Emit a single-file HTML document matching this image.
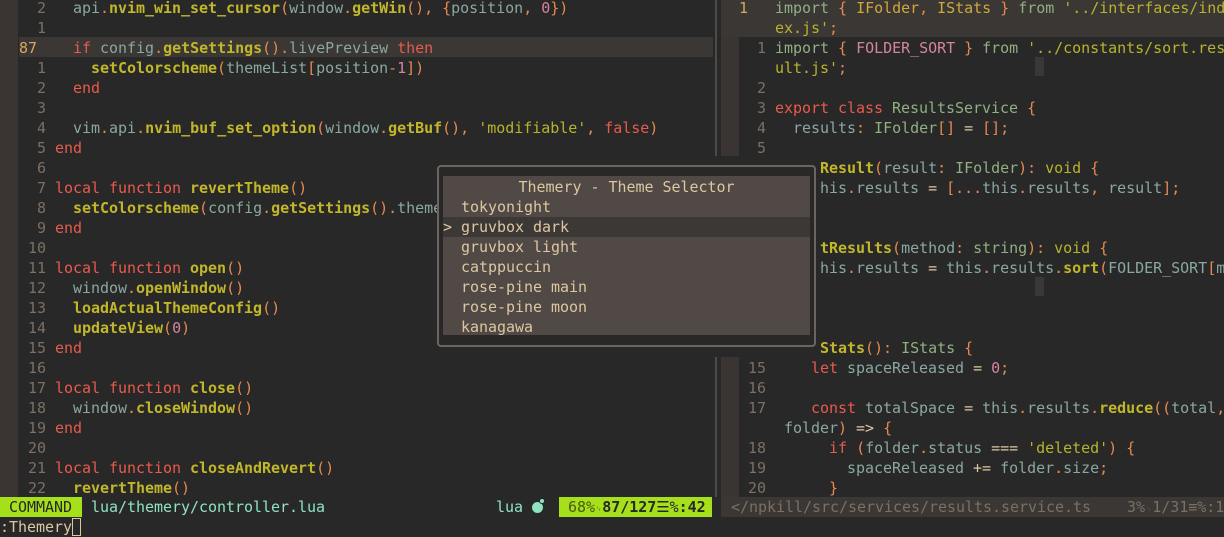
<!DOCTYPE html>
<html><head><meta charset="utf-8"><style>
*{margin:0;padding:0;box-sizing:border-box}
body{width:1224px;height:536px;overflow:hidden;background:#282828;font-family:"DejaVu Sans Mono","Liberation Mono",monospace;font-size:15px;letter-spacing:-0.03px;color:#8aa8a0;position:relative}
.r{position:absolute;height:20px;line-height:20px;white-space:pre;overflow:hidden}
.n{color:#7c6f64}
.cn{color:#d8a657}
.k{color:#ea5a4c}
.f{color:#c2b72a;font-weight:bold}
.p{color:#e78a4e}
.m{color:#d3869b}
.s{color:#b8b32c}
.g{color:#8fb080}
.y{color:#d0a83c}
.w{color:#ddc7a1}
</style></head><body>
<div style="position:absolute;left:0;top:0;width:18px;height:497px;background:#3a3532"></div>
<div style="position:absolute;left:19px;top:37px;width:694px;height:20px;background:#3a3735"></div>
<div style="position:absolute;left:715px;top:0;width:2px;height:497px;background:#504945"></div>
<div style="position:absolute;left:721px;top:0;width:18px;height:497px;background:#3a3532"></div>
<div style="position:absolute;left:721px;top:-3px;width:503px;height:40px;background:#3a3735"></div>

<div id="L" style="position:absolute;left:0;top:1px;width:713px;height:496px;overflow:hidden">
<div class="r" style="left:19px;top:-3px"><span class="n">  2 </span>  api<span class="p">.</span><span class="f">nvim_win_set_cursor</span><span class="p">(</span>window<span class="p">.</span><span class="f">getWin</span><span class="p">(),</span> <span class="p">{</span>position<span class="p">,</span> <span class="m">0</span><span class="p">})</span></div>
<div class="r" style="left:19px;top:17px"><span class="n">  1 </span></div>
<div class="r" style="left:19px;top:37px"><span class="cn">87  </span>  <span class="k">if</span> config<span class="p">.</span><span class="f">getSettings</span><span class="p">().</span>livePreview <span class="k">then</span></div>
<div class="r" style="left:19px;top:57px"><span class="n">  1 </span>    <span class="f">setColorscheme</span><span class="p">(</span>themeList<span class="p">[</span>position<span class="p">-</span><span class="m">1</span><span class="p">])</span></div>
<div class="r" style="left:19px;top:77px"><span class="n">  2 </span>  <span class="k">end</span></div>
<div class="r" style="left:19px;top:97px"><span class="n">  3 </span></div>
<div class="r" style="left:19px;top:117px"><span class="n">  4 </span>  vim<span class="p">.</span>api<span class="p">.</span><span class="f">nvim_buf_set_option</span><span class="p">(</span>window<span class="p">.</span><span class="f">getBuf</span><span class="p">(),</span> <span class="s">'modifiable'</span><span class="p">,</span> <span class="k">false</span><span class="p">)</span></div>
<div class="r" style="left:19px;top:137px"><span class="n">  5 </span><span class="k">end</span></div>
<div class="r" style="left:19px;top:157px"><span class="n">  6 </span></div>
<div class="r" style="left:19px;top:177px"><span class="n">  7 </span><span class="k">local function</span> <span class="f">revertTheme</span><span class="p">()</span></div>
<div class="r" style="left:19px;top:197px"><span class="n">  8 </span>  <span class="f">setColorscheme</span><span class="p">(</span>config<span class="p">.</span><span class="f">getSettings</span><span class="p">().</span>themeList</div>
<div class="r" style="left:19px;top:217px"><span class="n">  9 </span><span class="k">end</span></div>
<div class="r" style="left:19px;top:237px"><span class="n"> 10 </span></div>
<div class="r" style="left:19px;top:257px"><span class="n"> 11 </span><span class="k">local function</span> <span class="f">open</span><span class="p">()</span></div>
<div class="r" style="left:19px;top:277px"><span class="n"> 12 </span>  window<span class="p">.</span><span class="f">openWindow</span><span class="p">()</span></div>
<div class="r" style="left:19px;top:297px"><span class="n"> 13 </span>  <span class="f">loadActualThemeConfig</span><span class="p">()</span></div>
<div class="r" style="left:19px;top:317px"><span class="n"> 14 </span>  <span class="f">updateView</span><span class="p">(</span><span class="m">0</span><span class="p">)</span></div>
<div class="r" style="left:19px;top:337px"><span class="n"> 15 </span><span class="k">end</span></div>
<div class="r" style="left:19px;top:357px"><span class="n"> 16 </span></div>
<div class="r" style="left:19px;top:377px"><span class="n"> 17 </span><span class="k">local function</span> <span class="f">close</span><span class="p">()</span></div>
<div class="r" style="left:19px;top:397px"><span class="n"> 18 </span>  window<span class="p">.</span><span class="f">closeWindow</span><span class="p">()</span></div>
<div class="r" style="left:19px;top:417px"><span class="n"> 19 </span><span class="k">end</span></div>
<div class="r" style="left:19px;top:437px"><span class="n"> 20 </span></div>
<div class="r" style="left:19px;top:457px"><span class="n"> 21 </span><span class="k">local function</span> <span class="f">closeAndRevert</span><span class="p">()</span></div>
<div class="r" style="left:19px;top:477px"><span class="n"> 22 </span>  <span class="f">revertTheme</span><span class="p">()</span></div>
</div>

<div id="R" style="position:absolute;left:721px;top:1px;width:503px;height:496px;overflow:hidden">
<div class="r" style="left:18px;top:-3px"><span class="cn">1   </span><span class="g">import</span> <span class="p">{</span> <span class="y">IFolder</span><span class="p">,</span> <span class="y">IStats</span> <span class="p">}</span> <span class="g">from</span> <span class="s">'../interfaces/index</span></div>
<div class="r" style="left:18px;top:17px">    <span class="s">ex.js'</span><span class="p">;</span></div>
<div class="r" style="left:18px;top:37px"><span class="n">  1 </span><span class="g">import</span> <span class="p">{</span> <span class="m">FOLDER_SORT</span> <span class="p">}</span> <span class="g">from</span> <span class="s">'../constants/sort.result</span></div>
<div class="r" style="left:18px;top:57px">    <span class="s">ult.js'</span><span class="p">;</span></div>
<div class="r" style="left:18px;top:77px"><span class="n">  2 </span></div>
<div class="r" style="left:18px;top:97px"><span class="n">  3 </span><span class="k">export class</span> <span class="g">ResultsService</span> <span class="p">{</span></div>
<div class="r" style="left:18px;top:117px"><span class="n">  4 </span>  results<span class="p">:</span> <span class="g">IFolder</span><span class="p">[]</span> <span class="w">=</span> <span class="p">[];</span></div>
<div class="r" style="left:18px;top:137px"><span class="n">  5 </span></div>
<div class="r" style="left:18px;top:157px"><span class="n">  6 </span>  <span class="f">addResult</span><span class="p">(</span>result<span class="p">:</span> <span class="g">IFolder</span><span class="p">):</span> <span class="s">void</span> <span class="p">{</span></div>
<div class="r" style="left:18px;top:177px"><span class="n">  7 </span>    this<span class="p">.</span>results <span class="w">=</span> <span class="p">[...</span>this<span class="p">.</span>results<span class="p">,</span> result<span class="p">];</span></div>
<div class="r" style="left:18px;top:237px"><span class="n"> 10 </span>  <span class="f">sortResults</span><span class="p">(</span>method<span class="p">:</span> <span class="g">string</span><span class="p">):</span> <span class="s">void</span> <span class="p">{</span></div>
<div class="r" style="left:18px;top:257px"><span class="n"> 11 </span>    this<span class="p">.</span>results <span class="w">=</span> this<span class="p">.</span>results<span class="p">.</span><span class="f">sort</span><span class="p">(</span>FOLDER_SORT<span class="p">[</span>method</div>
<div class="r" style="left:18px;top:277px">    <span class="p">]);</span></div>
<div class="r" style="left:18px;top:337px"><span class="n"> 14 </span>  <span class="f">getStats</span><span class="p">():</span> <span class="g">IStats</span> <span class="p">{</span></div>
<div class="r" style="left:18px;top:357px"><span class="n"> 15 </span>    <span class="k">let</span> spaceReleased <span class="w">=</span> <span class="m">0</span><span class="p">;</span></div>
<div class="r" style="left:18px;top:377px"><span class="n"> 16 </span></div>
<div class="r" style="left:18px;top:397px"><span class="n"> 17 </span>    <span class="k">const</span> totalSpace <span class="w">=</span> this<span class="p">.</span>results<span class="p">.</span><span class="f">reduce</span><span class="p">((</span>total<span class="p">,</span></div>
<div class="r" style="left:18px;top:417px">     folder<span class="p">)</span> <span class="w">=&gt;</span> <span class="p">{</span></div>
<div class="r" style="left:18px;top:437px"><span class="n"> 18 </span>      <span class="k">if</span> <span class="p">(</span>folder<span class="p">.</span>status <span class="w">===</span> <span class="s">'deleted'</span><span class="p">)</span> <span class="p">{</span></div>
<div class="r" style="left:18px;top:457px"><span class="n"> 19 </span>        spaceReleased <span class="w">+=</span> folder<span class="p">.</span>size<span class="p">;</span></div>
<div class="r" style="left:18px;top:477px"><span class="n"> 20 </span>      <span class="p">}</span></div>
<div style="position:absolute;left:314px;top:56px;width:9px;height:19px;background:#3a3735"></div>
<div style="position:absolute;left:314px;top:276px;width:9px;height:19px;background:#3a3735"></div>
</div>

<div style="position:absolute;left:437px;top:156px;width:383px;height:201px;background:#282828"></div>
<div style="position:absolute;left:437px;top:165px;width:379px;height:182px;border:2px solid #6e645c;border-radius:4px;background:#282828"></div>
<div style="position:absolute;left:443px;top:176px;width:367px;height:159px;background:#504945;color:#ddc7a1">
<div class="r" style="left:0;top:1px;width:367px;text-align:center">Themery - Theme Selector</div>
<div class="r" style="left:0;top:21px">  tokyonight</div>
<div class="r" style="left:0;top:41px;width:367px;background:#3c3836">&gt; gruvbox dark</div>
<div class="r" style="left:0;top:61px">  gruvbox light</div>
<div class="r" style="left:0;top:81px">  catppuccin</div>
<div class="r" style="left:0;top:101px">  rose-pine main</div>
<div class="r" style="left:0;top:121px">  rose-pine moon</div>
<div class="r" style="left:0;top:141px">  kanagawa</div>
</div>

<div style="position:absolute;left:0;top:497px;width:1224px;height:20px;background:#282828"></div>
<div class="r" style="left:0;top:497px;width:82px;background:#a6e01a;color:#282828;padding-left:9px">COMMAND</div>
<div class="r" style="left:91px;top:497px;color:#8fe3c0">lua/themery/controller.lua</div>
<div class="r" style="left:496px;top:497px;color:#8fe3c0">lua</div>
<div style="position:absolute;left:532px;top:502px;width:11px;height:11px;border-radius:50%;background:#8fe3c0"></div>
<div style="position:absolute;left:540px;top:499px;width:4px;height:4px;border-radius:50%;background:#8fe3c0;box-shadow:0 0 0 1px #282828"></div>
<div class="r" style="left:559px;top:497px;width:153px;background:#a6e01a;color:#282828;padding-left:9px"><span style="color:#4a5a10">68%</span><span style="font-size:9px">␊</span><b>87/127</b>☰%<b>:42</b></div>
<div class="r" style="left:721px;top:497px;width:503px;background:#3a3735;color:#7c6f64;padding-left:10px">&lt;/npkill/src/services/results.service.ts    3%<span style="font-size:9px">␊</span>1/31≡%:1</div>
<div class="r" style="left:0;top:517px;color:#ddc7a1">:Themery<span style="display:inline-block;width:9px;height:18px;border:1px solid #ddc7a1;vertical-align:-4px"></span></div>
</body></html>
